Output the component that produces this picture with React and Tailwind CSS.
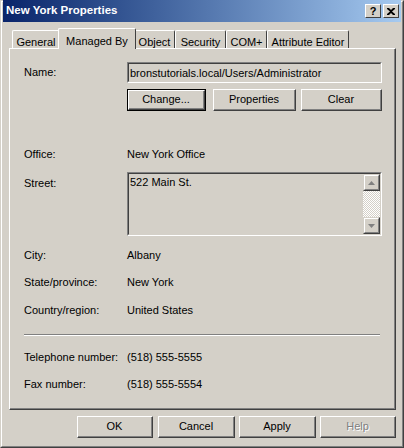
import React from "react";

const font = { fontFamily: '"Liberation Sans", Arial, sans-serif' };

function Btn({ children, className = "", disabled = false, focused = false }) {
  return (
    <div
      className={
        "flex items-center justify-center h-[22px] " +
        (focused ? "border border-black " : "") +
        className
      }
    >
      <div className="w-full h-full border-t border-l border-white border-r border-b border-r-[#404040] border-b-[#404040]">
        <div
          className={
            "w-full h-full flex items-center justify-center border-r border-b border-r-[#808080] border-b-[#808080] text-[11px] " +
            (disabled ? "text-[#808080] [text-shadow:1px_1px_0_#fff]" : "text-black")
          }
        >
          {children}
        </div>
      </div>
    </div>
  );
}

function Row({ label, value, className = "" }) {
  return (
    <div className={"flex items-center h-[14px] text-[11px] text-black " + className}>
      <div className="w-[103px]">{label}</div>
      <div>{value}</div>
    </div>
  );
}

function Sunken({ className = "", children }) {
  return (
    <div className={"border-t border-l border-[#808080] border-r border-b border-r-white border-b-white " + className}>
      <div className="w-full h-full border-t border-l border-[#404040] border-r border-b border-r-[#d4d0c8] border-b-[#d4d0c8]">
        {children}
      </div>
    </div>
  );
}

function Tab({ label, selected, className = "" }) {
  if (selected) {
    return (
      <div className={"relative z-10 -mx-[2px] h-[21px] mb-[-1px] bg-[#d4d0c8] border-t border-l border-white border-r border-r-[#404040] rounded-t-[2px] flex items-start justify-center pt-[4px] text-[11px] " + className}>
        {label}
      </div>
    );
  }
  return (
    <div className={"h-[18px] mt-[2px] border-t border-l border-white border-r border-r-[#404040] rounded-t-[2px] flex items-start justify-center pt-[3px] text-[11px] " + className}>
      {label}
    </div>
  );
}

export default function App() {
  return (
    <div style={font} className="w-[404px] h-[448px] bg-[#d4d0c8] border-l border-t border-[#d4d0c8] border-r border-b border-r-[#404040] border-b-[#404040] select-none">
      <div className="w-full h-full border-l border-t border-white border-r border-b border-r-[#808080] border-b-[#808080] px-[1px] flex flex-col">
        {/* Title bar */}
        <div className="h-[22px] -mt-[2px] flex items-center justify-between pl-[3px] pr-[2px] bg-gradient-to-r from-[#0a246a] to-[#a6caf0]">
          <div className="text-white font-bold text-[11.5px]">New York Properties</div>
          <div className="flex gap-[2px]">
            <div className="w-[16px] h-[14px] bg-[#d4d0c8] border-t border-l border-white border-r border-b border-r-[#404040] border-b-[#404040] flex items-center justify-center text-[11px] font-bold text-black leading-none">?</div>
            <div className="w-[16px] h-[14px] bg-[#d4d0c8] border-t border-l border-white border-r border-b border-r-[#404040] border-b-[#404040] flex items-center justify-center">
              <svg width="8" height="7" viewBox="0 0 8 7">
                <path d="M0 0h2l2 2 2-2h2v1L5 3.5 8 6v1H6L4 5 2 7H0V6l3-2.5L0 1z" fill="#000" />
              </svg>
            </div>
          </div>
        </div>

        {/* Tabs */}
        <div className="flex pl-[9px] mt-[6px] h-[20px] items-end text-black">
          <Tab label="General" className="w-[48px]" />
          <Tab label="Managed By" selected className="w-[78px]" />
          <Tab label="Object" className="w-[41px]" />
          <Tab label="Security" className="w-[51px]" />
          <Tab label="COM+" className="w-[41px]" />
          <Tab label="Attribute Editor" className="w-[82px]" />
        </div>

        {/* Panel */}
        <div className="ml-[6px] w-[387px] h-[362px] border-t border-l border-white border-r border-b border-r-[#404040] border-b-[#404040]">
          <div className="w-full h-full border-r border-b border-r-[#808080] border-b-[#808080] pl-[14px] flex flex-col">
            <div className="mt-[13px] flex items-center h-[21px] text-[11px]">
              <div className="w-[103px]">Name:</div>
              <Sunken className="w-[255px] h-[21px]">
                <div className="pl-[1px] pt-[2px] text-[11px] leading-[14px]">bronstutorials.local/Users/Administrator</div>
              </Sunken>
            </div>
            <div className="mt-[6px] flex pl-[103px]">
              <Btn focused className="w-[79px]">Change...</Btn>
              <Btn className="w-[83px] ml-[7px]">Properties</Btn>
              <Btn className="w-[81px] ml-[5px]">Clear</Btn>
            </div>
            <Row label="Office:" value="New York Office" className="mt-[36px]" />
            <div className="mt-[11px] flex text-[11px] h-[64px]">
              <div className="w-[103px] pt-[3px]">Street:</div>
              <Sunken className="w-[255px] h-[64px]">
                <div className="flex h-full">
                  <div className="flex-1 pl-[1px] pt-[1px] leading-[14px]">522 Main St.</div>
                  <div className="w-[17px] h-full flex flex-col">
                    <div className="h-[17px] bg-[#d4d0c8] border-t border-l border-[#d4d0c8] border-r border-b border-r-[#404040] border-b-[#404040]">
                      <div className="w-full h-full border-t border-l border-white border-r border-b border-r-[#808080] border-b-[#808080] flex items-center justify-center">
                        <svg width="7" height="4" viewBox="0 0 7 4"><path d="M3.5 0L7 4H0z" fill="#808080" /></svg>
                      </div>
                    </div>
                    <div className="flex-1 bg-[image:repeating-conic-gradient(#ffffff_0%_25%,#d4d0c8_0%_50%)] bg-[length:2px_2px]" />
                    <div className="h-[17px] bg-[#d4d0c8] border-t border-l border-[#d4d0c8] border-r border-b border-r-[#404040] border-b-[#404040]">
                      <div className="w-full h-full border-t border-l border-white border-r border-b border-r-[#808080] border-b-[#808080] flex items-center justify-center">
                        <svg width="7" height="4" viewBox="0 0 7 4"><path d="M0 0h7L3.5 4z" fill="#808080" /></svg>
                      </div>
                    </div>
                  </div>
                </div>
              </Sunken>
            </div>
            <Row label="City:" value="Albany" className="mt-[12px]" />
            <Row label="State/province:" value="New York" className="mt-[13px]" />
            <Row label="Country/region:" value="United States" className="mt-[14px]" />
            <div className="mt-[17px] w-[356px] h-[2px] border-t border-[#808080] border-b border-b-white" />
            <Row label="Telephone number:" value="(518) 555-5555" className="mt-[14px]" />
            <Row label="Fax number:" value="(518) 555-5554" className="mt-[13px]" />
          </div>
        </div>

        {/* Bottom buttons */}
        <div className="mt-[6px] flex pl-[74px]">
          <Btn className="w-[76px]">OK</Btn>
          <Btn className="w-[77px] ml-[5px]">Cancel</Btn>
          <Btn className="w-[77px] ml-[4px]">Apply</Btn>
          <Btn disabled className="w-[76px] ml-[4px]">Help</Btn>
        </div>
      </div>
    </div>
  );
}
